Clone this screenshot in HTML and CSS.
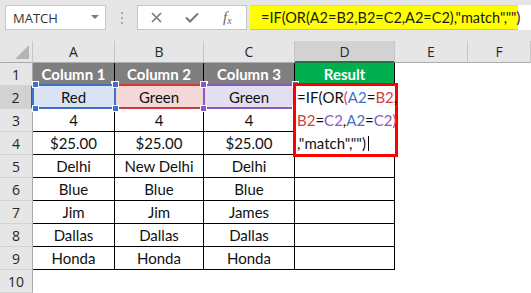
FILE: index.html
```html
<!DOCTYPE html>
<html>
<head>
<meta charset="utf-8">
<link rel="stylesheet" href="styles.css">
</head>
<body>
<div class="app">
  <div class="top">
    <div class="namebox"><span class="nb-text">MATCH</span><span class="nb-arrow"></span></div>
    <div class="grip"><i></i><i></i><i></i></div>
    <div class="btns">
      <svg class="b-x" width="11" height="11" viewBox="0 0 11 11"><path d="M1 1L10 10M10 1L1 10" stroke="#777" stroke-width="1.6" fill="none"/></svg>
      <svg class="b-ok" width="14" height="11" viewBox="0 0 14 11"><path d="M1 5.5L5 9.5L13 1.5" stroke="#777" stroke-width="2" fill="none"/></svg>
      <span class="b-fx"><i>f</i><sub>x</sub></span>
    </div>
    <div class="fbar"><div class="ftext">=IF(OR(A2=B2,B2=C2,A2=C2),"match","")</div></div>
  </div>

  <div class="sheet">
    <div class="corner"><span class="tri"></span></div>
    <div class="ch">A</div><div class="ch">B</div><div class="ch">C</div><div class="ch sel">D</div><div class="ch">E</div><div class="ch">F</div>

    <div class="rh">1</div>
    <div class="c hd">Column 1</div><div class="c hd">Column 2</div><div class="c hd">Column 3</div><div class="c res">Result</div><div class="e"></div><div class="e"></div>

    <div class="rh rsel">2</div>
    <div class="c hl blue">Red<span class="h tl"></span><span class="h tr"></span><span class="h bl"></span><span class="h br"></span></div>
    <div class="c hl red">Green<span class="h tl"></span><span class="h tr"></span><span class="h bl"></span><span class="h br"></span></div>
    <div class="c hl purple">Green<span class="h tl"></span><span class="h tr"></span><span class="h bl"></span><span class="h br"></span></div>
    <div class="c"></div><div class="e"></div><div class="e"></div>

    <div class="rh">3</div>
    <div class="c">4</div><div class="c">4</div><div class="c">4</div><div class="c"></div><div class="e"></div><div class="e"></div>

    <div class="rh">4</div>
    <div class="c">$25.00</div><div class="c">$25.00</div><div class="c">$25.00</div><div class="c"></div><div class="e"></div><div class="e"></div>

    <div class="rh">5</div>
    <div class="c">Delhi</div><div class="c">New Delhi</div><div class="c">Delhi</div><div class="c"></div><div class="e"></div><div class="e"></div>

    <div class="rh">6</div>
    <div class="c">Blue</div><div class="c">Blue</div><div class="c">Blue</div><div class="c"></div><div class="e"></div><div class="e"></div>

    <div class="rh">7</div>
    <div class="c">Jim</div><div class="c">Jim</div><div class="c">James</div><div class="c"></div><div class="e"></div><div class="e"></div>

    <div class="rh">8</div>
    <div class="c">Dallas</div><div class="c">Dallas</div><div class="c">Dallas</div><div class="c"></div><div class="e"></div><div class="e"></div>

    <div class="rh">9</div>
    <div class="c">Honda</div><div class="c">Honda</div><div class="c">Honda</div><div class="c"></div><div class="e"></div><div class="e"></div>

    <div class="rh">10</div>
    <div class="e"></div><div class="e"></div><div class="e"></div><div class="e"></div><div class="e"></div><div class="e"></div>

    <div class="edit">
      <div class="ln">=IF<span class="p">(</span>OR<span class="q">(</span><span class="kb">A2</span>=<span class="kr">B2</span>,</div>
      <div class="ln"><span class="kr">B2</span>=<span class="kp">C2</span>,<span class="kb">A2</span>=<span class="kp">C2</span><span class="q">)</span></div>
      <div class="ln">,"match",""<span class="p">)</span><span class="cursor"></span></div>
    </div>
  </div>
</div>
</body>
</html>
```

FILE: styles.css
```css
html, body {
  margin: 0;
  padding: 0;
  background: #ffffff;
}
.app {
  width: 531px;
  height: 293px;
  overflow: hidden;
  position: relative;
}
.top {
  height: 41px;
  box-sizing: border-box;
  background: #e6e6e6;
  display: flex;
  align-items: flex-start;
  padding: 5px 0 0 5px;
}
.namebox {
  width: 101px;
  height: 25px;
  box-sizing: border-box;
  background: #fff;
  border: 1px solid #c6c6c6;
  display: flex;
  align-items: center;
  justify-content: space-between;
  padding: 0 6px 0 7px;
}
.nb-text {
  font-family: "Open Sans", "Liberation Sans", sans-serif;
  font-size: 13px;
  color: #333;
}
.nb-arrow {
  width: 0;
  height: 0;
  border-left: 4px solid transparent;
  border-right: 4px solid transparent;
  border-top: 4px solid #7a7a7a;
  margin-top: -2px;
}
.grip {
  width: 31px;
  height: 25px;
  display: flex;
  flex-direction: column;
  align-items: center;
  justify-content: center;
  gap: 3px;
}
.grip i {
  display: block;
  width: 2px;
  height: 2px;
  background: #a8a8a8;
}
.btns {
  width: 110px;
  height: 25px;
  box-sizing: border-box;
  background: #fff;
  border: 1px solid #c6c6c6;
  display: flex;
  align-items: center;
  padding-left: 13px;
}
.b-x { margin-right: 23px; }
.b-ok { margin-right: 24px; }
.b-fx {
  font-family: "Liberation Serif", serif;
  font-size: 15px;
  color: #666;
  line-height: 1;
}
.b-fx i { font-style: italic; }
.b-fx sub { font-size: 10px; font-style: italic; vertical-align: -2px; }
.fbar {
  flex: 1;
  height: 25px;
  margin-left: 3px;
  background: #fff;
  display: flex;
}
.ftext {
  width: 268px;
  height: 25px;
  box-sizing: border-box;
  background: #ffff00;
  border-bottom: 1px solid #d6d600;
  border-top: 1px solid #e8e800;
  padding-left: 11px;
  font-family: Lato, "Liberation Sans", sans-serif;
  font-size: 14.5px;
  line-height: 23px;
  color: #1a1a1a;
  white-space: nowrap;
}
.sheet {
  position: relative;
  display: grid;
  grid-template-columns: 33px 82px 89px 91px 100px 73px 63px;
  grid-template-rows: 22px repeat(10, 23px);
  font-family: Lato, "Liberation Sans", sans-serif;
  font-size: 15px;
  color: #111;
}
.corner {
  position: relative;
  background: #e6e6e6;
  border-right: 1px solid #c6c6c6;
  border-bottom: 1px solid #ababab;
  box-sizing: border-box;
}
.tri {
  position: absolute;
  right: 3px;
  bottom: 3px;
  width: 0;
  height: 0;
  border-left: 14px solid transparent;
  border-bottom: 14px solid #b5b5b5;
}
.ch {
  background: #e6e6e6;
  border-right: 1px solid #c6c6c6;
  border-bottom: 1px solid #ababab;
  box-sizing: border-box;
  display: flex;
  align-items: center;
  justify-content: center;
  font-family: "Open Sans", "Liberation Sans", sans-serif;
  font-size: 14px;
  color: #262626;
}
.ch.sel {
  background: #d2d2d2;
  border-bottom: 2px solid #217346;
}
.rh {
  background: #e6e6e6;
  border-right: 1px solid #ababab;
  border-bottom: 1px solid #d4d4d4;
  box-sizing: border-box;
  display: flex;
  align-items: center;
  justify-content: center;
  font-family: "Open Sans", "Liberation Sans", sans-serif;
  font-size: 14px;
  color: #262626;
}
.rh.rsel {
  background: #d2d2d2;
  border-right: 2px solid #217346;
}
.c {
  position: relative;
  border-right: 1px solid #000;
  border-bottom: 1px solid #000;
  box-sizing: border-box;
  display: flex;
  align-items: center;
  justify-content: center;
  white-space: nowrap;
}
.c.hd {
  background: #7f7f7f;
  color: #fff;
  font-weight: 700;
}
.c.res {
  background: #00b050;
  color: #fff;
  font-weight: 700;
}
.e { background: #fff; }

.hl::after {
  content: "";
  position: absolute;
  left: -1px;
  top: -2px;
  right: -2px;
  bottom: -1px;
  border: 2px solid var(--k);
  pointer-events: none;
}
.hl.blue { background: #dae3f3; --k: #3f72c6; z-index: 2; }
.hl.red { background: #f4d8d8; --k: #cc3a3a; z-index: 1; }
.hl.purple { background: #e4dff0; --k: #8a5bbf; z-index: 3; }
.h {
  position: absolute;
  width: 5px;
  height: 5px;
  background: var(--k);
  border: 1px solid #fff;
  z-index: 4;
}
.h.tl { left: -4px; top: -5px; }
.h.tr { right: -5px; top: -5px; }
.h.bl { left: -4px; bottom: -4px; }
.h.br { right: -5px; bottom: -4px; }
.hl.blue .h.tl, .hl.blue .h.bl { left: -1px; }

.edit {
  position: absolute;
  left: 293px;
  top: 42px;
  width: 105px;
  height: 74px;
  box-sizing: border-box;
  border: 3px solid #ff0000;
  background: #fff;
  z-index: 5;
  font-family: Lato, "Liberation Sans", sans-serif;
  font-size: 15px;
  color: #111;
  padding-left: 1px;
  overflow: visible;
}
.ln {
  height: 23px;
  line-height: 23px;
  white-space: nowrap;
  display: flex;
  align-items: center;
}
.kb { color: #3f72c6; }
.kr { color: #d0403c; }
.kp { color: #8a5bbf; }
.q { color: #d9446a; }
.cursor {
  display: inline-block;
  width: 1px;
  height: 15px;
  background: #000;
  margin-left: 2px;
}
```
